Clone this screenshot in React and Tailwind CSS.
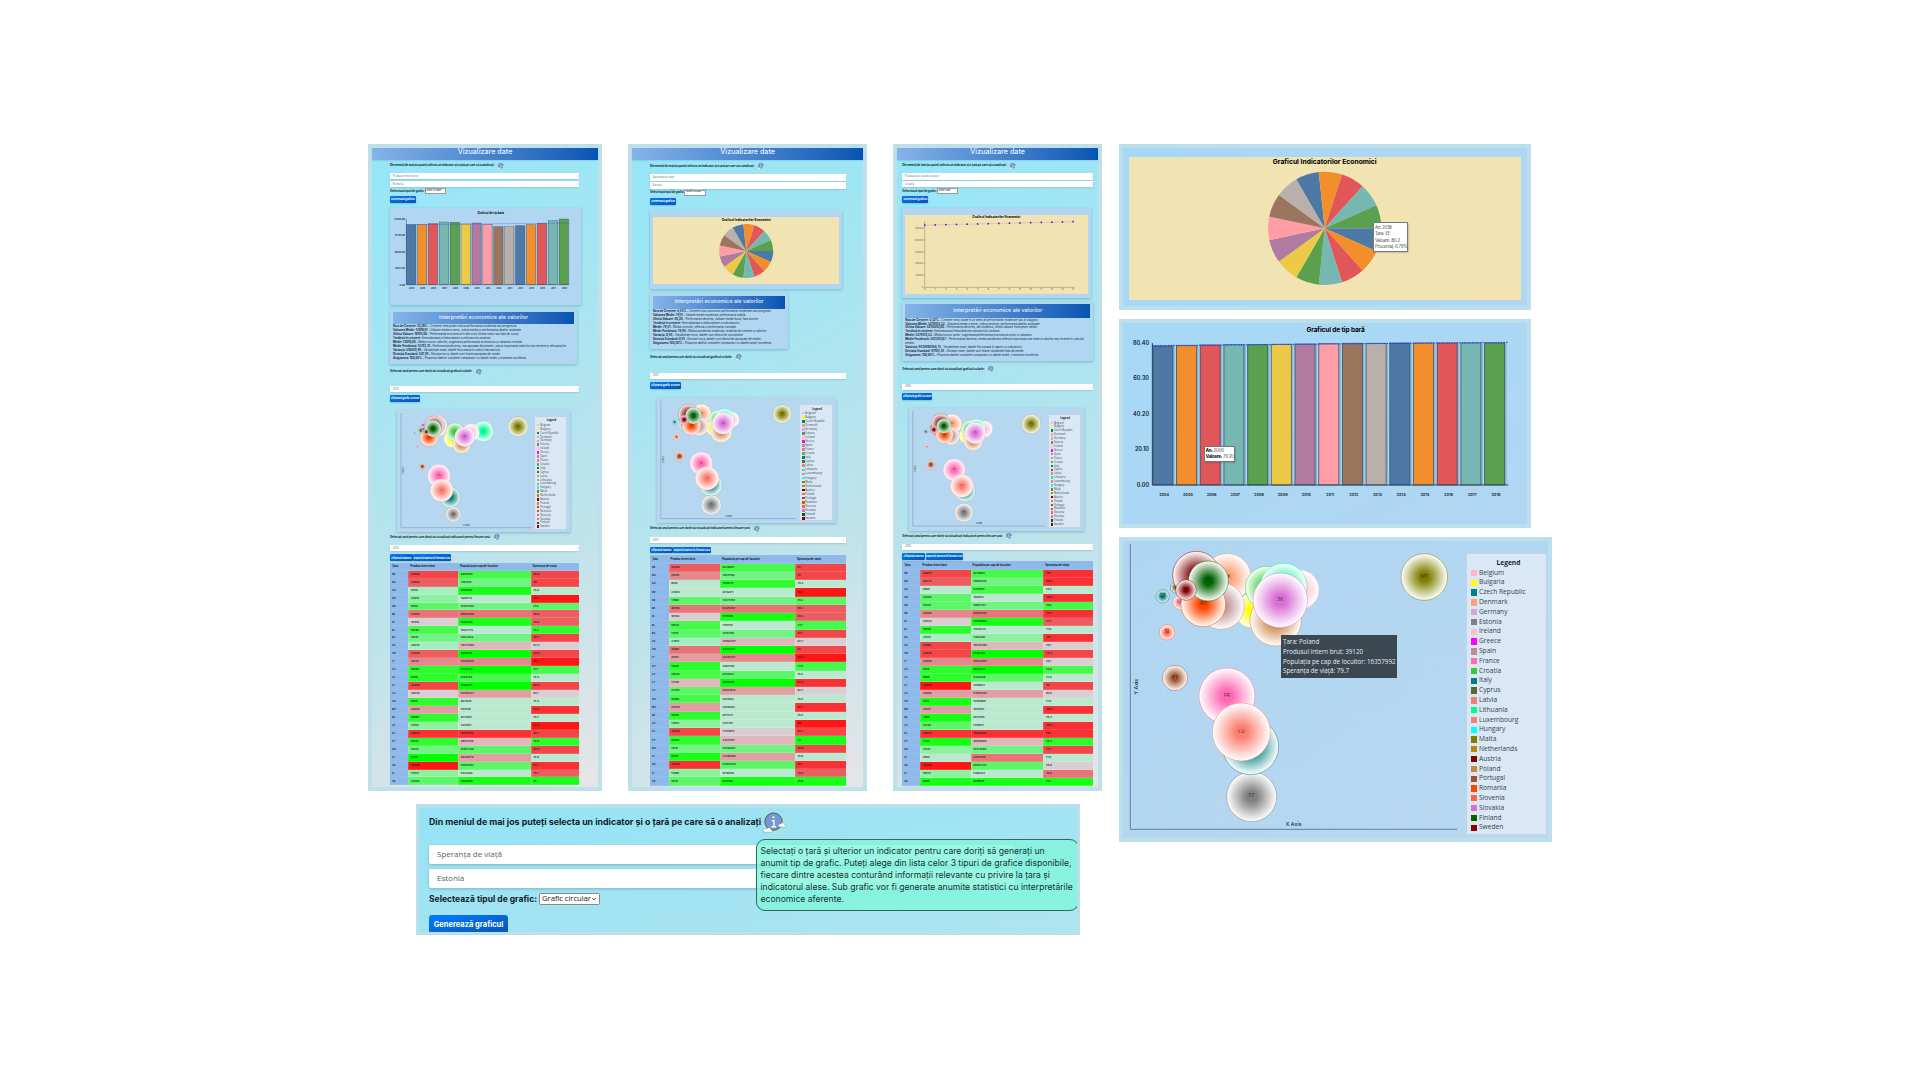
import React from "react";

const PALETTE = ["#4e79a7", "#f28e2b", "#e15759", "#76b7b2", "#59a14f", "#edc948", "#b07aa1", "#ff9da7", "#9c755f", "#bab0ab"];

const LEGEND = [
  ["Belgium", "#ffb6c1"], ["Bulgaria", "#ffff00"], ["Czech Republic", "#008080"], ["Denmark", "#ffa07a"],
  ["Germany", "#dda0dd"], ["Estonia", "#808080"], ["Ireland", "#ffc0cb"], ["Greece", "#ff00ff"],
  ["Spain", "#bc8f8f"], ["France", "#ff69b4"], ["Croatia", "#32cd32"], ["Italy", "#008080"],
  ["Cyprus", "#556b2f"], ["Latvia", "#f08080"], ["Lithuania", "#00fa9a"], ["Luxembourg", "#fa8072"],
  ["Hungary", "#00ffff"], ["Malta", "#808000"], ["Netherlands", "#b8860b"], ["Austria", "#800000"],
  ["Poland", "#cd853f"], ["Portugal", "#a0522d"], ["Romania", "#ff4500"], ["Slovenia", "#ff6347"],
  ["Slovakia", "#da70d6"], ["Finland", "#006400"], ["Sweden", "#8b0000"],
];

const COLORS = {
  BE: "#ffb6c1", BG: "#ffff00", CZ: "#008080", DK: "#ffa07a", DE: "#dda0dd", EE: "#808080", IE: "#ffc0cb", EL: "#ff00ff",
  ES: "#bc8f8f", FR: "#ff69b4", HR: "#32cd32", IT: "#008080", CY: "#556b2f", LV: "#f08080", LT: "#00fa9a", LU: "#fa8072",
  MT: "#808000", AT: "#800000", PL: "#cd853f", PT: "#a0522d", RO: "#ff4500", SI: "#ff6347", SK: "#da70d6", FI: "#006400", SE: "#8b0000",
};

const CODES = "BE BG CZ DK DE EE IE EL ES FR HR IT CY LV LT LU HU MT NL AT PL PT RO SI SK FI SE".split(" ");

const HEAT = {
  R4: "#ff1616", R3: "#f93034", R2: "#f24648", R1: "#ec5d61", R0: "#e87478", P2: "#e4888c", P1: "#e29fa3", P0: "#dfb8bd",
  N: "#d9cfd3", G0: "#bbe9d0", G1: "#a6eec2", G2: "#8df1a0", G3: "#74f385", G4: "#5cf668", G5: "#46f94b", G6: "#2efc2e", G7: "#17ff17", G8: "#00ff00",
};

const MAIN_BUBBLES = [
  ["BG", 410, 242, 50], ["CY", 183, 172, 17], ["DK", 337, 142, 71], ["ES", 318, 228, 70], ["IE", 553, 179, 59], ["HR", 455, 173, 64],
  ["LT", 506, 170, 70], ["LV", 195, 217, 21], ["CZ", 143, 199, 20], ["AT", 244, 135, 71], ["MT", 928, 141, 70], ["PL", 482, 271, 77],
  ["RO", 265, 223, 67], ["SK", 496, 211, 82], ["FI", 280, 153, 60], ["SE", 213, 180, 31], ["SI", 156, 307, 23], ["PT", 180, 444, 38],
  ["FR", 336, 498, 84], ["EE", 410, 800, 75], ["IT", 407, 650, 84], ["LU", 379, 606, 87],
];
const MAIN_LABELS = ["DK", "LV", "CZ", "MT", "RO", "SK", "FI", "SE", "SI", "PT", "FR", "LU", "EE"];

const pages = [
  {
    id: "a",
    frame: "w-[702px]",
    body: "pl-[54px]",
    full: "w-[568px]",
    head: "h-[36px]",
    indicator: "Produsul intern brut", country: "Romania", kind: "Grafic cu bare", year: "2010",
    rows: {
      l1: "mt-[6px]", s1: "mt-[13px] h-[18px]", s2: "mt-[6px] h-[18px]", kind: "mt-[3px]", b1: "mt-[7px] h-[21px] w-[78px]",
      card: "mt-[15px] h-[290px] w-[573px]", info: "mt-[13px] h-[165px] w-[561px]", l2: "mt-[13px]", s3: "mt-[33px] h-[18px]",
      b2: "mt-[10px] h-[21px] w-[90px]", bub: "mt-[24px] h-[367px] w-[521px]", l3: "mt-[4px]", s4: "mt-[14px] h-[18px]", b3: "mt-[10px] h-[21px]",
    },
    infoHead: "mt-[8px] h-[38px]", infoLine: "h-[12px]",
    legend: "mt-[19px] h-[340px] w-[98px] text-[8px]",
    view: [95, 59, 413, 367], axis: [107, 69, 498, 412], dx: 39, dy: 34,
    bubbles: [
      ["EE", 147, 128, 3], ["SI", 155, 168, 3], ["PT", 171, 229, 10], ["MT", 458, 109, 30], ["LT", 354, 123, 30], ["IE", 317, 126, 25],
      ["BG", 262, 145, 26], ["HR", 269, 125, 27], ["PL", 289, 162, 27], ["SK", 298, 139, 30], ["DK", 215, 108, 31], ["ES", 212, 107, 32],
      ["AT", 208, 106, 29], ["RO", 191, 141, 27], ["CY", 167, 120, 10], ["EL", 173, 104, 5], ["CZ", 174, 116, 5], ["FI", 203, 115, 25],
      ["SE", 183, 125, 8], ["FR", 221, 256, 34], ["IT", 255, 321, 31], ["LU", 229, 300, 34], ["EE", 264, 372, 23],
    ],
    tableTop: "mt-[4px]", headRow: "h-[24px]", rowH: "h-[23.9px]", cols: "grid-cols-[55px_149px_218px_146px]",
    heat: [
      "R2 R1 G1 G2 G4 R0 N G5 G3 G1 R1 P2 G6 G6 R2 N G6 P1 G6 G2 R3 G6 G3 G8 R4 G2 G4",
      "G5 G3 G7 G0 G3 R0 G7 G0 G3 P0 G8 P2 G8 G5 G8 P1 G0 G0 G0 G0 R3 P0 G4 P1 G4 G0 G7",
      "R2 R2 G0 R4 G4 R1 R1 G6 R2 N R2 R4 G5 G0 R2 N G0 R3 G0 R4 R2 G6 R2 G0 R3 R1 G7",
    ],
    vals: [
      "34580 33490 8450 33410 9560 32080 46410 19640 16610 29840 34060 29710 10030 9050 32360 29640 9650 33600 10080 17060 38060 10120 16010 9270 49330 17650 22090",
      "9497840 7487016 7084662 4968713 10404436 80828784 5092553 10022716 10023413 46727890 4340216 61648250 4226544 9704793 4089375 50486227 9971065 507048 9521065 4221961 16574976 38042118 10487208 38206716 53951042 5634963 5494306",
      "80.9 80 76.9 81.7 77.6 79.9 79.6 76.7 80.7 82.4 80.9 81.7 77.1 76.4 80.4 82.1 76.4 81.0 76.7 81.6 80.7 76.0 80.0 76.8 81.2 76.7 76",
    ],
    lines: [
      ["Rata de Creștere: 10,26% - ", "Creștere netă poate indica performanță moderată sau progresivă."],
      ["Valoarea Medie: 13616,67 - ", "Valoare medie a seriei, indică media și performanța datelor analizate."],
      ["Ultima Valoare: 16188,00 - ", "Performanță economică în decursul ultimei valori sau față de sursă."],
      ["Tendință în creștere: ", "Semnalizează o îmbunătățire a indicatorului analizat."],
      ["Medie: 13616,00 - ", "Media tuturor valorilor, sugerează performanța economică și valoarea centrală."],
      ["Medie Ponderată: 13742,31 - ", "Performanță decentă, mai aproape de prezent, indică importanța valorilor mai recente și relevanța lor."],
      ["Varianță: 510088,98 - ", "Variabilitate mare, datele fluctuează în cadrul indicatorului."],
      ["Deviația Standard: 501,89 - ", "Deviație mică, datele sunt foarte apropiate de medie."],
      ["Asigurarea: 100,00% - ", "Proporția datelor complete comparativ cu datele totale, o estimare excelentă."],
    ],
  },
  {
    id: "b",
    frame: "w-[718px]",
    body: "pl-[54px]",
    full: "w-[587px]",
    head: "h-[36px]",
    indicator: "Speranța de viață", country: "Estonia", kind: "Grafic circular", year: "2007",
    rows: {
      l1: "mt-[7px]", s1: "mt-[15px] h-[19px]", s2: "mt-[5px] h-[19px]", kind: "mt-[4px]", b1: "mt-[7px] h-[21px] w-[79px]",
      card: "mt-[16px] h-[236px] w-[577px]", info: "mt-[14px] h-[166px] w-[415px]", l2: "mt-[16px]", s3: "mt-[36px] h-[18px]",
      b2: "mt-[10px] h-[21px] w-[93px]", bub: "mt-[28px] h-[375px] w-[539px]", l3: "mt-[6px]", s4: "mt-[16px] h-[19px]", b3: "mt-[10px] h-[20px]",
    },
    infoHead: "mt-[7px] h-[39px]", infoLine: "h-[12.2px]",
    legend: "mt-[18px] h-[351px] w-[101px] text-[8.28px]",
    view: [95, 53, 427, 375], axis: [106, 61, 511, 415], dx: 40.5, dy: 35.3,
    bubbles: [
      ["BG", 264, 142, 23], ["CY", 173, 112, 8], ["DK", 228, 101, 29], ["ES", 220, 138, 28], ["IE", 318, 118, 23], ["HR", 277, 117, 27],
      ["LT", 297, 114, 29], ["LV", 172, 135, 10], ["CZ", 147, 125, 7], ["AT", 189, 102, 31], ["MT", 470, 101, 28], ["PL", 287, 154, 32],
      ["RO", 198, 136, 28], ["SK", 293, 129, 33], ["FI", 204, 106, 25], ["SE", 176, 118, 13], ["SI", 153, 170, 9], ["PT", 162, 228, 15],
      ["FR", 227, 249, 34], ["EE", 257, 374, 30], ["IT", 256, 313, 34], ["LU", 245, 294, 35],
    ],
    tableTop: "mt-[6px]", headRow: "h-[25px]", rowH: "h-[24.7px]", cols: "grid-cols-[56px_154px_225px_152px]",
    heat: [
      "R1 P2 G0 G0 G4 R0 N G5 G4 G1 R0 P1 G6 G5 P0 G4 G5 P1 G6 G2 R2 G6 G3 G7 R3 G2 G4",
      "G5 G3 G6 G0 G3 R0 G7 G0 G3 P0 G8 P2 G0 G4 G8 P1 G0 G0 G0 G0 N P0 G3 P1 G4 G0 G7",
      "R2 R2 G0 R4 G4 R1 R1 G5 R2 N R2 R4 G5 G0 R3 N G0 R3 G0 R4 R2 G7 R2 G0 R3 R1 G7",
    ],
    vals: [
      "37900 29010 8910 24350 17880 30730 46109 18070 17410 24810 33901 31801 10010 10040 17730 25700 10380 28470 10010 17850 33350 10460 16110 8790 49750 17680 19110",
      "9529807 10041189 7619214 9549211 10474410 82315207 5741910 11181110 10141188 45892447 4340234 63281247 4981448 9750347 4036310 50641079 9616163 4026963 9514211 4121787 17101964 43511081 10290907 21430088 52854342 9518068 9141188",
      "81 81 76.4 82.1 78.2 80.2 80.2 77.7 81.1 82.7 81 82.3 77.4 76.5 81.6 82.7 76.5 81.7 76.5 82 81.2 77 80.8 76.8 81.7 79.6 76.6",
    ],
    lines: [
      ["Rata de Creștere: 5,85% - ", "Creștere ușor pozitivă a performanței moderate sau prognoze."],
      ["Valoarea Medie: 79,14 - ", "Valoare medie moderată, performanță stabilă."],
      ["Ultima Valoare: 80,20 - ", "Performanță decentă, valoare medie bună, fără excese."],
      ["Tendință în creștere: ", "Semnalizează o îmbunătățire a indicatorului."],
      ["Medie: 79,41 - ", "Media centrală, reflectă o performanță normală."],
      ["Medie Ponderată: 79,88 - ", "Media ponderată moderată, tendința de creștere a valorilor."],
      ["Varianță: 0,84 - ", "Variabilitate mică, datele sunt destul de consistente."],
      ["Deviația Standard: 0,91 - ", "Deviație mică, datele sunt destul de apropiate de medie."],
      ["Asigurarea: 100,00% - ", "Proporția datelor complete comparativ cu datele totale, excelentă."],
    ],
  },
  {
    id: "c",
    frame: "w-[626px]",
    body: "pl-[15px]",
    full: "w-[573px]",
    head: "h-[35px]",
    indicator: "Populația pe cap de locuitor", country: "Croatia", kind: "Grafic liniar", year: "2006",
    rows: {
      l1: "mt-[7px]", s1: "mt-[13px] h-[19px]", s2: "mt-[5px] h-[18px]", kind: "mt-[4px]", b1: "mt-[7px] h-[20px] w-[78px]",
      card: "mt-[16px] h-[270px] w-[567px]", info: "mt-[12px] h-[175px] w-[573px]", l2: "mt-[16px]", s3: "mt-[33px] h-[18px]",
      b2: "mt-[10px] h-[21px] w-[90px]", bub: "mt-[25px] h-[367px] w-[525px]", l3: "mt-[7px]", s4: "mt-[13px] h-[18px]", b3: "mt-[10px] h-[20px]",
    },
    infoHead: "mt-[6px] h-[40px]", infoLine: "h-[11.8px]",
    legend: "mt-[18px] h-[342px] w-[98px] text-[8px]",
    view: [59, 803, 416, 367], axis: [70, 812, 466, 1157], dx: 39.5, dy: 34.5,
    bubbles: [
      ["BG", 232, 886, 23], ["CY", 126, 860, 6], ["DK", 188, 851, 29], ["ES", 184, 887, 27], ["IE", 285, 866, 24], ["HR", 242, 867, 27],
      ["LT", 261, 863, 27], ["LV", 135, 882, 7], ["CZ", 109, 874, 6], ["AT", 154, 849, 29], ["MT", 425, 851, 29], ["PL", 251, 901, 29],
      ["RO", 165, 883, 26], ["SK", 257, 878, 32], ["FI", 163, 857, 22], ["SE", 133, 868, 11], ["SI", 113, 919, 4], ["PT", 124, 973, 14],
      ["FR", 194, 988, 33], ["EE", 223, 1117, 28], ["IT", 226, 1052, 32], ["LU", 217, 1037, 34],
    ],
    tableTop: "mt-[5px]", headRow: "h-[25px]", rowH: "h-[24.05px]", cols: "grid-cols-[54px_151px_218px_150px]",
    heat: [
      "R2 R1 G0 G4 G4 P2 N G6 G1 R2 R2 P2 G6 G6 R4 P1 G7 P1 G7 G4 R3 G7 G2 G0 R4 G2 G7",
      "G5 G3 G5 G0 G3 R0 G7 G0 G2 P0 G8 P2 G8 G4 G0 P1 G0 G0 G0 G0 R3 P0 G3 R0 G4 G0 G7",
      "R3 R3 G0 R3 G5 R3 R1 G0 R3 N R2 N G5 G0 R2 N G0 R3 G0 R3 R3 G6 R2 G0 N R0 G7",
    ],
    vals: [
      "33950 29570 8890 22090 18450 29490 42020 10020 21870 31800 32840 34050 8150 8860 34030 34060 7010 31070 7360 14290 38600 7240 18120 8860 47080 18070 8200",
      "9548891 10886608 9745861 7996112 10807267 82537573 58170603 11048224 11380081 46245480 9536782 60422087 4040555 9403948 4286814 57485034 10188800 4016281 9870158 5018871 16366563 38160980 10472068 20151748 80105470 5386422 9218875",
      "78.7 78.9 76.4 78.9 78.8 78.9 77.5 77.9 78.7 78.7 78.4 78.7 78.9 75.9 79 80.6 77.6 78.9 78.4 78.9 78.7 78.4 77.7 77.6 78.9 78.9 76.7",
    ],
    lines: [
      ["Rata de Creștere: 5,52% - ", "Creștere netă, poate fi un semn al performanței moderate sau al stagnării."],
      ["Valoarea Medie: 5279813,53 - ", "Valoarea medie a seriei, indică tendințe, performanța datelor analizate."],
      ["Ultima Valoare: 5282083,00 - ", "Performanță decentă, dar modestă, ultima valoare fiind peste medie."],
      ["Tendință în creștere: ", "Semnalizează îmbunătățirea indicatorului analizat."],
      ["Medie: 5279813,53 - ", "Media tuturor anilor, sugerează performanța economică a țării și valoarea."],
      ["Medie Ponderată: 5423151,67 - ", "Performanță decentă, media ponderată reflectă importanța mai mare a valorilor mai recente în calculul"],
      ["", "mediei."],
      ["Varianță: 9429268858,75 - ", "Variabilitate mare, datele fluctuează în raport cu indicatorul."],
      ["Deviația Standard: 97104,42 - ", "Deviație mare, datele sunt foarte răspândite față de medie."],
      ["Asigurarea: 100,00% - ", "Proporția datelor complete comparativ cu datele totale, o estimare excelentă."],
    ],
  },
];

function InfoIcon({ className }) {
  return (
    <svg viewBox="0 0 60 60" className={className}>
      <path d="M12 8 Q28 -2 44 8 Q60 18 57 36 Q50 46 44 54 Q28 64 16 52 Q0 40 3 26 Q4 14 12 8Z" fill="#a9e5dc" />
      <circle cx="30" cy="29" r="20" fill="#7398d2" stroke="#3f5475" strokeWidth="2.2" />
      <path d="M26 27h5v14M25 41h11" fill="none" stroke="#fff" strokeWidth="3" />
      <circle cx="30" cy="19" r="2.5" fill="#fff" />
      <path d="M7 53c-4-7 5-9 7-6 2-6 10-4 10 1 5 0 4 6 1 6z" fill="#fff" stroke="#6d8080" strokeWidth="1" />
      <path d="M42 41c-3-5 2-8 5-6 1-5 8-4 8 1 5 1 4 6 0 6z" fill="#fff" stroke="#6d8080" strokeWidth="1" />
    </svg>
  );
}

function Chevron({ className }) {
  return (
    <svg viewBox="0 0 10 10" className={className}>
      <path d="M2 3.5l3 3 3-3" fill="none" stroke="#333" strokeWidth="1.5" />
    </svg>
  );
}

function SelectBar({ className, children }) {
  return (
    <div className={`${className} flex items-center justify-between bg-white pl-[8px] pr-px font-['Open_Sans',sans-serif] text-[8px] leading-none text-[#666] shadow-[0_2px_4px_rgba(0,0,0,0.12)]`}>
      <span>{children}</span>
      <Chevron className="h-[6px] w-[6px]" />
    </div>
  );
}

function Button({ className, children }) {
  return (
    <div className={`${className} flex shrink-0 items-center justify-center whitespace-nowrap rounded-[3px] bg-linear-to-br from-[#047cf6] to-[#0654b4] text-[8px] font-bold leading-none tracking-[-0.15px] text-white shadow-[0_2px_5px_rgba(0,0,0,0.2)]`}>
      {children}
    </div>
  );
}

function Caption({ className, children }) {
  return (
    <div className={`${className} flex h-[20px] items-center gap-[8px] whitespace-nowrap text-[8.8px] font-bold leading-none tracking-[-0.25px] text-[#10252d]`}>
      <span>{children}</span>
      <InfoIcon className="h-[23px] w-[23px]" />
    </div>
  );
}

function Pie({ cx, cy, r }) {
  const point = (i) => {
    const t = (i * 2 * Math.PI) / 15;
    return `${cx + r * Math.cos(t)} ${cy + r * Math.sin(t)}`;
  };
  return (
    <g>
      {Array.from({ length: 15 }, (_, i) => (
        <path key={i} d={`M${cx} ${cy}L${point(i)}A${r} ${r} 0 0 1 ${point(i + 1)}Z`} fill={PALETTE[i % 10]} />
      ))}
    </g>
  );
}

function BarPlot({ x, top, bottom, right, pitch, width, tops, labels, size, labelX, yearY, yearSize, trend, stroke }) {
  const step = (bottom - top) / 4;
  return (
    <g fontWeight="600" fill="#0b1a26">
      {tops.map((t, i) => (
        <g key={i}>
          <rect x={x + i * pitch} y={t} width={width + stroke * 2.4} height={bottom - t} fill="#24547a" opacity="0.25" />
          <rect x={x + i * pitch + stroke / 2} y={t} width={width} height={bottom - t} fill={PALETTE[i % 10]} stroke="#1c3545" strokeOpacity="0.55" strokeWidth={stroke} />
          <text x={x + i * pitch + pitch / 2} y={yearY} fontSize={yearSize} textAnchor="middle">{2004 + i}</text>
        </g>
      ))}
      <path d={`M${x} ${top}V${bottom}H${right}`} fill="none" stroke="#29455c" strokeWidth={stroke} />
      {labels.map((l, i) => (
        <text key={l} x={labelX} y={top + i * step + size * 0.35} fontSize={size} textAnchor="end">{l}</text>
      ))}
      <path d={`M${x} ${trend[0]}L${right} ${trend[1]}`} stroke="#2a36e8" strokeWidth={stroke} strokeDasharray={`${stroke * 1.6} ${stroke}`} />
    </g>
  );
}

function LinePlot() {
  return (
    <svg viewBox="48 223 549 237" className="h-full w-full">
      <text x="322" y="233" fontSize="9.4" fontWeight="700" textAnchor="middle">Graficul Indicatorilor Economici</text>
      <path d="M107 241V440H556" fill="none" stroke="#6f6a55" strokeWidth="1.2" />
      {["500000", "400000", "300000", "200000", "100000"].map((t, i) => (
        <g key={t}>
          <text x="102" y={264 + i * 35.8} fontSize="6.5" fill="#6a6552" textAnchor="end">{t}</text>
          <path d={`M103 ${261.5 + i * 35.8}h4`} stroke="#6f6a55" strokeWidth="1" />
        </g>
      ))}
      <text x="102" y="442" fontSize="6.5" fill="#6a6552" textAnchor="end">0</text>
      <path d="M107 253.5L552 243" stroke="#f5a8b8" strokeWidth="2" />
      {Array.from({ length: 15 }, (_, i) => (
        <g key={i}>
          <path d={`M${107 + i * 31.8} 440v4`} stroke="#6f6a55" />
          <text x={107 + i * 31.8} y="449" fontSize="7" fill="#6a6552" textAnchor="middle">{i}</text>
          <circle cx={107 + i * 31.8} cy={253.5 - i * 0.75} r="2.6" fill="#2026f0" />
        </g>
      ))}
    </svg>
  );
}

function Bubbles({ id, view, axis, dx, dy, items, labels, scale, className }) {
  const [x0, y0, x1, y1] = axis;
  const verticals = Array.from({ length: 9 }, (_, i) => x0 + dx * (i + 1)).filter((v) => v < x1);
  const horizontals = Array.from({ length: 9 }, (_, i) => y0 + dy * (i + 1));
  return (
    <svg viewBox={view.join(" ")} className={className}>
      <defs>
        {Object.entries(COLORS).map(([k, c]) => (
          <radialGradient key={k} id={`${id}-${k}`}>
            <stop offset="0.2" stopColor={c} />
            <stop offset="1" stopColor="#fff" />
          </radialGradient>
        ))}
      </defs>
      {verticals.map((v) => <path key={v} d={`M${v} ${y0}V${y1}`} stroke="#c9d5ec" strokeOpacity="0.65" strokeWidth={1.8 * scale} />)}
      {horizontals.map((v) => <path key={v} d={`M${x0} ${v}H${x1}`} stroke="#c9d5ec" strokeOpacity="0.65" strokeWidth={1.8 * scale} />)}
      <path d={`M${x0} ${y0}V${y1}H${x1}`} fill="none" stroke="#65809a" strokeWidth={3 * scale} />
      <text x={(x0 + x1) / 2} y={y1 - 11 * scale} fontSize={15.5 * scale} fontWeight="500" textAnchor="middle" fill="#152b3b">X Axis</text>
      <text transform={`translate(${x0 + 23 * scale} ${(y0 + y1) / 2}) rotate(-90)`} fontSize={15.5 * scale} fontWeight="500" textAnchor="middle" fill="#152b3b">Y Axis</text>
      {items.map(([k, x, y, r], i) => (
        <g key={i}>
          <circle cx={x} cy={y} r={r} fill={`url(#${id}-${k})`} stroke={COLORS[k]} strokeWidth={Math.max(2 * scale, 1)} strokeOpacity="0.75" />
          {labels.includes(k) && r > 7 && (
            <text x={x} y={y + 2 * scale} fontSize={14 * scale} textAnchor="middle" fill="#222" fillOpacity="0.85">{k}</text>
          )}
        </g>
      ))}
    </svg>
  );
}

function Legend({ className }) {
  return (
    <div className={`${className} shrink-0 border border-[#c3d3e2] bg-[#dae8f6] pl-[0.6em] font-['Open_Sans',sans-serif] text-[#34444f]`}>
      <div className="mt-[0.7em] h-[1.47em] text-center font-bold leading-[1.47em] text-[#1b2a35]">Legend</div>
      {LEGEND.map(([name, color]) => (
        <div key={name} className="flex h-[1.47em] items-center gap-[0.3em] leading-none">
          <span className="h-[0.95em] w-[0.95em]" style={{ backgroundColor: color }} />
          <span className="whitespace-nowrap">{name}</span>
        </div>
      ))}
    </div>
  );
}

function PageChart({ id }) {
  if (id === "a") {
    return (
      <svg viewBox="75 202 573 290" className="h-full w-full">
        <text x="377" y="220" fontSize="8.6" fontWeight="700" textAnchor="middle">Graficul de tip bară</text>
        <BarPlot x={124} top={235} bottom={432} right={614} pitch={32.7} width={27.5} stroke={1.4}
          tops={[252, 252, 249, 244, 245, 250, 247, 251, 258, 258, 255, 252, 248, 240, 235]}
          labels={["16188.00", "12141.00", "8094.00", "4047.00", "0.00"]} size={7.4} labelX={120} yearY={446} yearSize={6.2} trend={[252, 247]} />
      </svg>
    );
  }
  if (id === "b") {
    return (
      <div className="h-full px-[9px] pb-[13px] pt-[20px]">
        <div className="h-full bg-[#f1e3b2]">
          <svg viewBox="84 228 558 203" className="h-full w-full">
            <text x="363" y="239" fontSize="9.6" fontWeight="700" textAnchor="middle">Graficul Indicatorilor Economici</text>
            <Pie cx={363} cy={330} r={81} />
          </svg>
        </div>
      </div>
    );
  }
  return (
    <div className="h-full px-[9px] pb-[13px] pt-[20px]">
      <div className="h-full bg-[#f1e3b2]"><LinePlot /></div>
    </div>
  );
}

function Page({ page }) {
  const r = page.rows;
  const heat = page.heat.map((c) => c.split(" "));
  const vals = page.vals.map((c) => c.split(" "));
  return (
    <section className={`${page.frame} h-[1940px] shrink-0 border-[12.3px] border-[#bfe0eb] bg-[linear-gradient(150deg,#94e6f8_0%,#a8e5f1_35%,#bfe3eb_65%,#e6e5e7_100%)] [zoom:0.33333]`}>
      <div className={`${page.head} flex justify-center bg-linear-to-r from-[#84b4e8] to-[#0355b3] text-[21.5px] font-medium leading-[24px] text-[#eaf4ff] shadow-[0_2px_5px_rgba(0,0,0,0.15)]`}>
        Vizualizare date
      </div>
      <div className={page.body}>
        <Caption className={r.l1}>Din meniul de mai jos puteți selecta un indicator și o țară pe care să o analizați:</Caption>
        <SelectBar className={`${page.full} ${r.s1}`}>{page.indicator}</SelectBar>
        <SelectBar className={`${page.full} ${r.s2}`}>{page.country}</SelectBar>
        <div className={`${r.kind} flex h-[16px] items-center gap-[3px] whitespace-nowrap text-[8.6px] font-bold leading-none tracking-[-0.2px] text-[#10252d]`}>
          <span>Selectează tipul de grafic:</span>
          <span className="flex h-[12px] w-[58px] items-center justify-between bg-white px-[2px] text-[7.2px] font-normal outline-[0.6px] outline-[#9a9a9a]">
            {page.kind}
            <Chevron className="h-[5px] w-[5px]" />
          </span>
        </div>
        <Button className={r.b1}>Generează graficul</Button>
        <div className={`${r.card} bg-[#b0d6f2] shadow-[0_3px_8px_rgba(30,70,110,0.3)]`}>
          <PageChart id={page.id} />
        </div>
        <div className={`${r.info} overflow-hidden bg-[#b0d6f2] px-[9px] shadow-[0_3px_8px_rgba(30,70,110,0.3)]`}>
          <div className={`${page.infoHead} flex items-center justify-center bg-linear-to-r from-[#84b4e8] to-[#0355b3] text-[16px] font-medium text-[#eaf4ff]`}>
            Interpretări economice ale valorilor
          </div>
          {page.lines.map(([b, t]) => (
            <p key={b + t} className={`${page.infoLine} whitespace-nowrap text-[8.7px] leading-[12px] tracking-[-0.1px] text-[#152a3a]`}>
              <b>{b}</b>{t}
            </p>
          ))}
        </div>
        <Caption className={r.l2}>Selectați anul pentru care doriți să vizualizați graficul cu bule:</Caption>
        <SelectBar className={`${page.full} ${r.s3}`}>{page.year}</SelectBar>
        <Button className={r.b2}>Afișează grafic cu bule</Button>
        <div className={`${r.bub} ml-[20px] flex bg-[#b6d7f0] shadow-[0_3px_8px_rgba(30,70,110,0.3)]`}>
          <Bubbles id={page.id} view={page.view} axis={page.axis} dx={page.dx} dy={page.dy} items={page.bubbles} labels={MAIN_LABELS} scale={0.41} className="h-full min-w-0 flex-1" />
          <Legend className={`${page.legend} mr-[10px]`} />
        </div>
        <Caption className={r.l3}>Selectați anul pentru care doriți să vizualizați indicatorii pentru fiecare țară:</Caption>
        <SelectBar className={`${page.full} ${r.s4}`}>{page.year}</SelectBar>
        <div className="flex gap-[2px]">
          <Button className={`${r.b3} w-[68px]`}>Afișează tabelul</Button>
          <Button className={`${r.b3} w-[113px]`}>Exportă tabelul în format CSV</Button>
        </div>
        <div className={`${page.tableTop} ${page.full} text-[8px] leading-none text-[#0c1a24]`}>
          <div className={`grid ${page.cols} ${page.headRow} border-b border-[#9bbfe6] bg-[#8fb9ea] text-[8.7px] font-bold tracking-[-0.1px]`}>
            {["Țara", "Produs intern brut", "Populația pe cap de locuitor", "Speranța de viață"].map((h) => (
              <span key={h} className="flex items-center pl-[6px]">{h}</span>
            ))}
          </div>
          {CODES.map((code, i) => (
            <div key={code} className={`grid ${page.cols} ${page.rowH} font-semibold`}>
              <span className="flex items-center border-b border-[#98bde7] bg-[#8fb9ea] pl-[6px]">{code}</span>
              {heat.map((col, c) => (
                <span key={c} className="flex items-center border-b border-l border-white/15 pl-[5px]" style={{ backgroundColor: HEAT[col[i]] }}>
                  {vals[c][i]}
                </span>
              ))}
            </div>
          ))}
        </div>
      </div>
    </section>
  );
}

function PieCard() {
  return (
    <section className="h-[496px] w-[1237px] border-[12.3px] border-[#bcdfec] bg-linear-to-r from-[#a5d8f6] to-[#b1d6f2] px-[19px] pb-[16px] pt-[27px] [zoom:0.33333]">
      <div className="relative h-full bg-[#f1e3b2]">
        <svg viewBox="43 52 1183 429" className="h-full w-full">
          <text x="634" y="73" fontSize="20.5" fontWeight="700" textAnchor="middle" textLength="314">Graficul Indicatorilor Economici</text>
          <Pie cx={634} cy={266} r={171} />
        </svg>
        <div className="absolute left-[730px] top-[195px] h-[89px] w-[105px] whitespace-nowrap border-2 border-[#777] bg-white py-[4px] pl-[4px] text-[13px] leading-[19.4px] tracking-[-0.5px] text-[#444] shadow-[2px_3px_5px_rgba(0,0,0,0.3)]">
          <p>An: 2018</p><p>Țara: EE</p><p>Valoare: 80.2</p><p>Procentaj: 6.79%</p>
        </div>
      </div>
    </section>
  );
}

function BarCard() {
  return (
    <section className="relative h-[627px] w-[1237px] border-[12.3px] border-[#bcdfec] bg-linear-to-br from-[#a5d9f6] to-[#b1d6f2] [zoom:0.33333]">
      <svg viewBox="24 549 1213 603" className="h-full w-full">
        <text x="662" y="577" fontSize="19.5" fontWeight="700" textAnchor="middle" textLength="175">Graficul de tip bară</text>
        <BarPlot x={112} top={609} bottom={1035} right={1180} pitch={71.1} width={60} stroke={3}
          tops={[618, 617, 615, 614, 614, 613, 612, 611, 610, 610, 609, 609, 609, 609, 609]}
          labels={["80.40", "60.30", "40.20", "20.10", "0.00"]} size={16.5} labelX={102} yearY={1067} yearSize={11.5} trend={[617, 607]} />
      </svg>
      <div className="absolute left-[242px] top-[369px] h-[49px] w-[93px] whitespace-nowrap border-2 border-[#777] bg-white pl-[3px] pt-[2px] text-[13px] leading-[19px] tracking-[-0.5px] text-[#444] shadow-[2px_3px_5px_rgba(0,0,0,0.3)]">
        <p><b className="text-black">An:</b> 2006</p><p><b className="text-black">Valoare:</b> 79.20</p>
      </div>
    </section>
  );
}

function BubbleCard() {
  return (
    <section className="relative flex h-[914px] w-[1299px] border-[12.3px] border-[#bcdfec] bg-linear-to-br from-[#aed6f2] to-[#b9d7f0] [zoom:0.33333]">
      <Bubbles id="m" view={[24, 33, 1028, 890]} axis={[46, 42, 1026, 898]} dx={98.4} dy={85.7} items={MAIN_BUBBLES} labels={MAIN_LABELS} scale={1} className="h-full w-[1028px] shrink-0" />
      <Legend className="mt-[34px] h-[848px] w-[245px] text-[20px]" />
      <div className="absolute left-[474px] top-[281px] h-[129px] w-[349px] whitespace-nowrap bg-[#353f48]/95 py-[6px] pl-[6px] font-['Open_Sans',sans-serif] text-[18.7px] leading-[29.4px] text-[#e8edf0]">
        <p>Țara: Poland</p><p>Produsul intern brut: 39120</p><p>Populația pe cap de locuitor: 16357992</p><p>Speranța de viață: 79.7</p>
      </div>
    </section>
  );
}

function FormCard() {
  return (
    <section className="relative ml-[48px] mt-[13px] h-[131px] w-[664px] overflow-hidden border-x-[3px] border-b-[3px] border-t-[4px] border-[#bcdfec] bg-linear-to-br from-[#94e3f6] to-[#aee4ef] pl-[10px]">
      <div className="flex h-[27px] items-center gap-[3px] whitespace-nowrap text-[8.8px] font-bold text-[#0e222b]">
        <span className="w-[327px]">Din meniul de mai jos puteți selecta un indicator și o țară pe care să o analizați:</span>
        <InfoIcon className="h-[26px] w-[29px]" />
      </div>
      <div className="mt-[10px] flex h-[18.5px] w-[586px] items-center rounded-[2px] bg-white pl-[8px] font-['Open_Sans',sans-serif] text-[8px] text-[#5c6266] shadow-[0_1px_3px_rgba(0,0,0,0.2)]">Speranța de viață</div>
      <div className="mt-[5.5px] flex h-[18.5px] w-[586px] items-center rounded-[2px] bg-white pl-[8px] font-['Open_Sans',sans-serif] text-[8px] text-[#5c6266] shadow-[0_1px_3px_rgba(0,0,0,0.2)]">Estonia</div>
      <div className="mt-[5px] flex h-[13px] items-center gap-[2px] whitespace-nowrap text-[8.5px] font-bold text-[#0e222b]">
        <span>Selectează tipul de grafic:</span>
        <span className="flex h-[12px] w-[61px] items-center justify-between rounded-[1.5px] border border-[#888] bg-white px-[2px] font-['Open_Sans',sans-serif] text-[7.8px] font-normal tracking-[-0.1px] text-[#222]">
          Grafic circular
          <Chevron className="h-[6px] w-[6px] shrink-0" />
        </span>
      </div>
      <div className="mt-[9px] flex h-[20px] w-[79px] items-center justify-center rounded-[3px] bg-linear-to-br from-[#007bff] to-[#0654b0] pt-px text-[7.5px] font-bold text-white">Generează graficul</div>
      <div className="absolute left-[337px] top-[31px] h-[72px] w-[323px] whitespace-nowrap rounded-[9px] border border-[#33665f] bg-[#7ff6da]/80 pl-[3.5px] pt-[4.5px] text-[8.6px] leading-[12.2px] text-[#163139]">
        <p>Selectați o țară și ulterior un indicator pentru care doriți să generați un</p>
        <p>anumit tip de grafic. Puteți alege din lista celor 3 tipuri de grafice disponibile,</p>
        <p>fiecare dintre acestea conturând informații relevante cu privire la țara și</p>
        <p>indicatorul alese. Sub grafic vor fi generate anumite statistici cu interpretările</p>
        <p>economice aferente.</p>
      </div>
    </section>
  );
}

export default function App() {
  return (
    <main className="flex h-[1080px] w-[1920px] gap-[16px] overflow-hidden bg-white pl-[368px] pt-[144.4px] font-['Inter',sans-serif]">
      <div className="w-[735px] shrink-0">
        <div className="flex gap-[26px]">
          {pages.map((p) => <Page key={p.id} page={p} />)}
        </div>
        <FormCard />
      </div>
      <div className="flex shrink-0 flex-col items-start gap-[9.3px]">
        <PieCard />
        <BarCard />
        <BubbleCard />
      </div>
    </main>
  );
}
